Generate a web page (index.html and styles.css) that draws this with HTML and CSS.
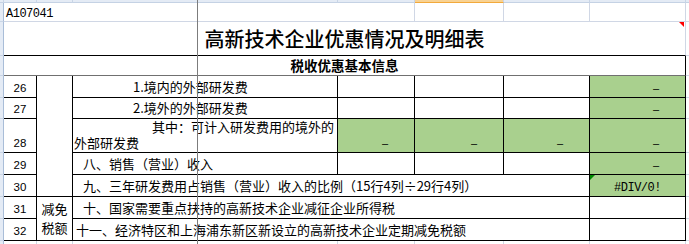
FILE: index.html
```html
<!DOCTYPE html>
<html lang="zh-CN">
<head>
<meta charset="utf-8">
<title>A107041 高新技术企业优惠情况及明细表</title>
<link rel="stylesheet" href="styles.css">
</head>
<body>
<div class="sheet">
  <div class="colhdr">
    <div></div><div></div><div></div><div></div><div></div><div class="sel"></div><div></div><div></div><div></div>
  </div>
  <div class="main">
    <div class="rowhdr">
      <div></div><div></div><div></div><div></div><div></div><div></div><div></div><div></div><div></div><div></div><div></div>
    </div>
    <div class="grid">
      <!-- row 1 -->
      <div class="c code span4">A107041</div>
      <div class="c"></div><div class="c"></div><div class="c"></div><div class="c"></div>
      <!-- title -->
      <div class="c title span7">高新技术企业优惠情况及明细表<span class="comment"></span></div>
      <div class="c"></div>
      <!-- section -->
      <div class="c section span7">税收优惠基本信息</div>
      <div class="c"></div>
      <!-- 26 -->
      <div class="c b num">26</div>
      <div class="c b tall5"></div>
      <div class="c b label ind60">1.境内的外部研发费</div>
      <div class="c b"></div><div class="c b"></div><div class="c b"></div>
      <div class="c b green dash">–</div>
      <div class="c"></div>
      <!-- 27 -->
      <div class="c b num">27</div>
      <div class="c b label ind60">2.境外的外部研发费</div>
      <div class="c b"></div><div class="c b"></div><div class="c b"></div>
      <div class="c b green dash">–</div>
      <div class="c"></div>
      <!-- 28 -->
      <div class="c b num">28</div>
      <div class="c b two">
        <div class="l1">其中：可计入研发费用的境外的</div>
        <div class="l2">外部研发费</div>
      </div>
      <div class="c b green dash">–</div>
      <div class="c b green dash">–</div>
      <div class="c b green dash">–</div>
      <div class="c b green dash">–</div>
      <div class="c"></div>
      <!-- 29 -->
      <div class="c b num">29</div>
      <div class="c b label ind10">八、销售（营业）收入</div>
      <div class="c b"></div><div class="c b"></div><div class="c b"></div>
      <div class="c b green dash">–</div>
      <div class="c"></div>
      <!-- 30 -->
      <div class="c b num">30</div>
      <div class="c b label ind10 span4">九、三年研发费用占销售（营业）收入的比例（15行4列÷29行4列）</div>
      <div class="c b green err">#DIV/0!<span class="flag"></span></div>
      <div class="c"></div>
      <!-- 31 -->
      <div class="c b num">31</div>
      <div class="c b tall2 vert"><span>减免</span><span>税额</span></div>
      <div class="c b label ind10 span4">十、国家需要重点扶持的高新技术企业减征企业所得税</div>
      <div class="c b"></div>
      <div class="c"></div>
      <!-- 32 -->
      <div class="c b num">32</div>
      <div class="c b label ind3 span4">十一、经济特区和上海浦东新区新设立的高新技术企业定期减免税额</div>
      <div class="c b"></div>
      <div class="c"></div>
      <!-- 33 -->
      <div class="c nb"></div><div class="c nb"></div><div class="c nb"></div><div class="c nb"></div>
      <div class="c nb"></div><div class="c nb"></div><div class="c nb"></div><div class="c nb"></div>
    </div>
  </div>
  <div class="freeze"></div>
</div>
</body>
</html>
```

FILE: styles.css
```css
* { box-sizing: border-box; margin: 0; padding: 0; }

body {
  margin: 0;
  width: 689px;
  height: 244px;
  overflow: hidden;
  background: #fff;
  color: #000;
  font-family: "Noto Sans CJK SC", sans-serif;
  font-size: 13px;
}

.sheet {
  position: relative;
  width: 689px;
  height: 244px;
  overflow: hidden;
}

.colhdr {
  display: grid;
  grid-template-columns: 4px 33px 36px 265px 77px 89px 86px 96px 20px;
  height: 3px;
  width: 706px;
}
.colhdr > div {
  background: #e4ebf5;
  border-right: 1px solid #c9d5e6;
  border-bottom: 1px solid #c5d2e4;
}
.colhdr > .sel {
  background: #f8d293;
  border-bottom: 1px solid #f2a93b;
}

.main {
  display: flex;
}

.rowhdr {
  flex: none;
  width: 4px;
  display: grid;
  grid-template-rows: 19px 34px 20px 22px 21px 34px 22px 22px 22px 22px 10px;
}
.rowhdr > div {
  background: #e4ebf5;
  border-right: 1px solid #a9bdd8;
  border-bottom: 1px solid #c9d5e6;
}

.grid {
  flex: none;
  display: grid;
  grid-template-columns: 33px 36px 265px 77px 89px 86px 96px 20px;
  grid-template-rows: 19px 34px 20px 22px 21px 34px 22px 22px 22px 22px 10px;
}

.c {
  position: relative;
  display: flex;
  align-items: flex-end;
  white-space: nowrap;
  overflow: hidden;
  line-height: 15px;
  padding-bottom: 3px;
  border-right: 1px solid #d0d7e5;
  border-bottom: 1px solid #d0d7e5;
}
.c.b {
  border-right-color: #000;
  border-bottom-color: #000;
}
.c.nb { border-bottom: none; }

.span4 { grid-column: span 4; }
.span7 { grid-column: span 7; }
.tall5 { grid-row: span 5; }
.tall2 { grid-row: span 2; }

.code {
  font-family: "Liberation Mono", monospace;
  font-size: 12px;
  letter-spacing: -0.5px;
  line-height: 14px;
  padding-left: 2px;
  padding-bottom: 0;
}

.title {
  overflow: visible;
  justify-content: center;
  align-items: center;
  padding: 1px 0 0 0;
  font-size: 20px;
  font-weight: 500;
  line-height: 24px;
  border-right-color: #d0d7e5;
  border-bottom-color: #000;
}
.comment {
  position: absolute;
  top: 0;
  right: 1px;
  width: 0;
  height: 0;
  border-top: 5px solid #f00;
  border-left: 5px solid transparent;
}

.section {
  justify-content: center;
  font-weight: bold;
  font-size: 13.5px;
  padding-bottom: 2px;
  border-right-color: #000;
  border-bottom-color: #707070;
}

.num {
  justify-content: center;
  font-family: "Liberation Sans", sans-serif;
  font-size: 11.5px;
  padding-bottom: 1px;
}

.label { padding-bottom: 3px; }
.ind60 { padding-left: 60px; }
.ind10 { padding-left: 10px; }
.ind3 { padding-left: 3px; }

.two {
  overflow: visible;
  flex-direction: column;
  align-items: stretch;
  justify-content: flex-end;
  line-height: 16px;
  padding-bottom: 1px;
}
.two .l1 { text-align: right; padding-right: 3px; }
.two .l2 { text-align: left; padding-left: 1px; }

.green { background: #a9d08e; }

.dash {
  justify-content: flex-end;
  padding-right: 26px;
  padding-bottom: 1px;
  font-family: "Liberation Sans", sans-serif;
  font-size: 11px;
}

.err {
  justify-content: center;
  font-family: "Liberation Mono", monospace;
  font-size: 12px;
  letter-spacing: -0.5px;
  padding-bottom: 0;
}
.flag {
  position: absolute;
  top: 0;
  left: 0;
  width: 0;
  height: 0;
  border-top: 5px solid #008a00;
  border-right: 5px solid transparent;
}

.vert {
  flex-direction: column;
  justify-content: center;
  align-items: center;
  line-height: 19px;
  padding: 0 0 1px 0;
}
.vert span { display: block; }

.freeze {
  position: absolute;
  left: 197px;
  top: 0;
  width: 1px;
  height: 244px;
  background: #7c7c7c;
}
```
